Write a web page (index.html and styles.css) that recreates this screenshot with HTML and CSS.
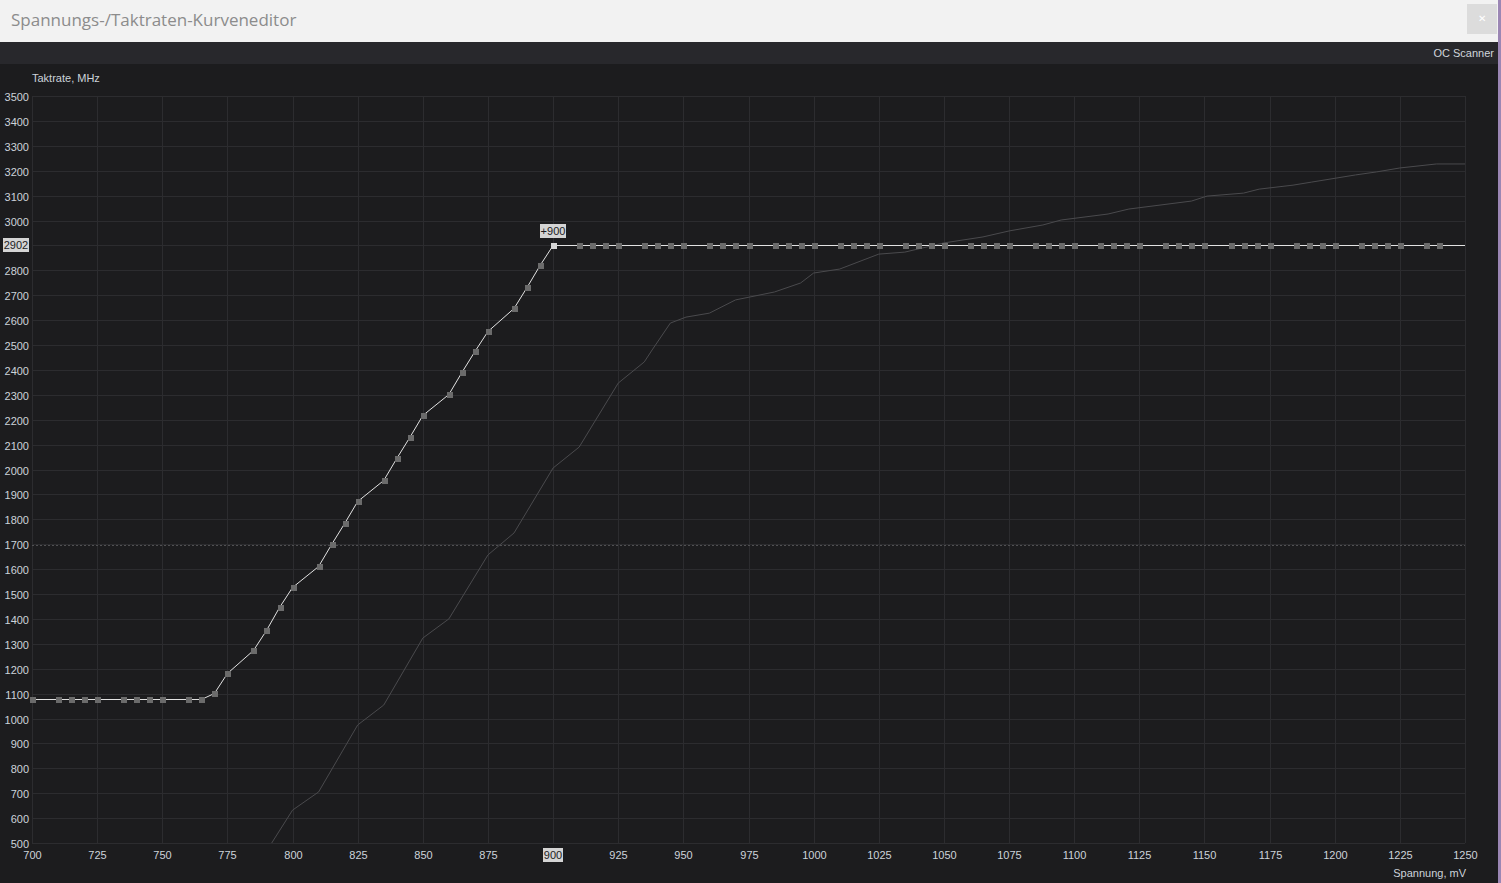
FILE: index.html
```html
<!DOCTYPE html>
<html lang="de">
<head>
<meta charset="UTF-8">
<meta name="viewport" content="width=device-width, initial-scale=1.0">
<title>Spannungs-/Taktraten-Kurveneditor</title>
<link rel="stylesheet" href="styles.css">
</head>
<body>
<div class="window">
    <header class="titlebar">
        <span class="title">Spannungs-/Taktraten-Kurveneditor</span>
        <button class="close" type="button">&#x2715;</button>
    </header>
    <div class="toolbar">
        <span class="scanner">OC Scanner</span>
    </div>
    <div class="plot">
        <svg id="curve" class="curve" width="1498" height="819" viewBox="0 64 1498 819"></svg>
    </div>
</div>
<div class="edge"></div>

<script>
    var NS = 'http://www.w3.org/2000/svg';
    var svg = document.getElementById('curve');

    // Plot area in pixels and the ranges it shows
    var X0 = 32, X1 = 1465, Y0 = 843, Y1 = 96;
    var MV_MIN = 700, MV_MAX = 1250, MHZ_MIN = 500, MHZ_MAX = 3500;

    function vx(mv) { return X0 + (mv - MV_MIN) * (X1 - X0) / (MV_MAX - MV_MIN); }
    function fy(mhz) { return Y0 - (mhz - MHZ_MIN) * (Y0 - Y1) / (MHZ_MAX - MHZ_MIN); }

    function add(tag, attrs, text) {
        var el = document.createElementNS(NS, tag);
        for (var k in attrs) el.setAttribute(k, attrs[k]);
        if (text !== undefined) el.textContent = text;
        svg.appendChild(el);
        return el;
    }

    // Raster
    for (var m = MHZ_MIN; m <= MHZ_MAX; m += 100) {
        var y = Math.round(fy(m)) + 0.5;
        add('line', { x1: X0, y1: y, x2: X1, y2: y, 'class': 'grid' });
        if (m !== 2900) add('text', { x: 29, y: y + 4, 'class': 'label end' }, m);
    }
    for (var v = MV_MIN; v <= MV_MAX; v += 25) {
        var x = Math.round(vx(v)) + 0.5;
        add('line', { x1: x, y1: Y1, x2: x, y2: Y0, 'class': 'grid' });
        if (v !== 900) add('text', { x: x, y: 859, 'class': 'label mid' }, v);
    }

    // Leistungsgrenze
    add('line', { x1: X0, y1: 545.5, x2: X1, y2: 545.5, 'class': 'limit' });

    add('text', { x: 32, y: 82, 'class': 'label' }, 'Taktrate, MHz');
    add('text', { x: 1466, y: 877, 'class': 'label end' }, 'Spannung, mV');

    // Standardkurve der Karte
    var stock = [[792,500],[800,632],[810,705],[825,974],[835,1054],[850,1323],[860,1400],
        [875,1657],[885,1745],[900,2006],[910,2090],[925,2347],[935,2432],[938,2480],
        [945,2588],[951,2612],[960,2628],[970,2681],[985,2713],[995,2749],[1000,2789],
        [1010,2805],[1025,2865],[1035,2873],[1050,2910],[1065,2934],[1075,2958],[1088,2982],
        [1095,3002],[1113,3026],[1121,3046],[1145,3078],[1151,3098],[1165,3110],[1171,3126],
        [1184,3142],[1191,3154],[1208,3183],[1216,3195],[1225,3211],[1239,3227],[1250,3227]];
    add('polyline', {
        points: stock.map(function (p) { return vx(p[0]) + ',' + fy(p[1]); }).join(' '),
        'class': 'stock'
    });

    // Bearbeitete Kurve
    var rise = { 770: 1103, 775: 1184, 785: 1275, 790: 1355, 795: 1449, 800: 1528,
        810: 1614, 815: 1701, 820: 1786, 825: 1873, 835: 1958, 840: 2047, 845: 2130,
        850: 2219, 860: 2303, 865: 2392, 870: 2476, 875: 2556, 885: 2649, 890: 2733,
        895: 2821, 900: 2902 };
    function clock(mv) {
        if (mv < 770) return 1080;
        if (mv > 900) return 2902;
        return rise[mv];
    }

    var dots = [700];
    for (var k = 0; k < 22; k++) {
        for (var s = 0; s < 20; s += 5) {
            var mv = 710 + k * 25 + s;
            if (mv <= 1240) dots.push(mv);
        }
    }

    var line = dots.concat([MV_MAX]).map(function (mv) {
        return vx(mv) + ',' + (Math.round(fy(clock(mv))) + 0.5);
    });
    add('polyline', { points: line.join(' '), 'class': 'edited' });

    dots.forEach(function (mv) {
        var cx = Math.round(vx(mv)), cy = Math.round(fy(clock(mv)));
        add('rect', { x: cx - 2, y: cy - 2, width: 6, height: 6,
            'class': mv === 900 ? 'dot active' : 'dot' });
    });

    // Markierungen fuer den gewaehlten Punkt
    function tag(x, y, w, text) {
        add('rect', { x: x, y: y, width: w, height: 14, 'class': 'tag' });
        add('text', { x: x + w / 2, y: y + 11, 'class': 'tag-text' }, text);
    }
    tag(540, 224, 26, '+900');
    tag(3, 238, 26, '2902');
    tag(543, 848, 20, '900');
</script>
</body>
</html>
```

FILE: styles.css
```css
html, body {
    height: 100%;
}
body {
    margin: 0;
    display: flex;
    background-color: #1c1c1e;
    font-family: "Liberation Sans", Arial, sans-serif;
    overflow: hidden;
}
.window {
    flex: 1;
    display: flex;
    flex-direction: column;
    min-width: 0;
}
.edge {
    width: 3px;
    background-color: #9b86b4;
}
.titlebar {
    height: 42px;
    display: flex;
    align-items: center;
    justify-content: space-between;
    padding-left: 11px;
    padding-right: 1px;
    background-color: #f2f2f2;
}
.title {
    font-family: "Open Sans", "Noto Sans", sans-serif;
    font-size: 17px;
    color: #8c8c8c;
    margin-top: -3px;
}
.close {
    width: 30px;
    height: 30px;
    margin-top: -4px;
    padding: 0;
    border: none;
    background-color: #dcdcdc;
    color: #fff;
    font-size: 10px;
    line-height: 30px;
    cursor: pointer;
}
.toolbar {
    height: 22px;
    display: flex;
    align-items: center;
    justify-content: flex-end;
    padding-right: 4px;
    background-color: #28282c;
}
.scanner {
    font-size: 11px;
    color: #d0d5db;
}
.plot {
    flex: 1;
    background-color: #1c1c1e;
}
.curve {
    display: block;
}
.grid {
    stroke: #2c2c2f;
    stroke-width: 1;
}
.limit {
    stroke: #505052;
    stroke-width: 1;
    stroke-dasharray: 2 2;
}
.label {
    font-family: "Liberation Sans", Arial, sans-serif;
    font-size: 11px;
    fill: #ccd3da;
}
.label.end {
    text-anchor: end;
}
.label.mid {
    text-anchor: middle;
}
.stock {
    fill: none;
    stroke: #4a4a4d;
    stroke-width: 1;
}
.edited {
    fill: none;
    stroke: #e2e2e2;
    stroke-width: 1;
}
.dot {
    fill: #6b6b6b;
}
.dot.active {
    fill: #d6d6d6;
}
.tag {
    fill: #d4d4d4;
}
.tag-text {
    font-family: "Liberation Sans", Arial, sans-serif;
    font-size: 11px;
    fill: #1c1c1e;
    text-anchor: middle;
}
```
